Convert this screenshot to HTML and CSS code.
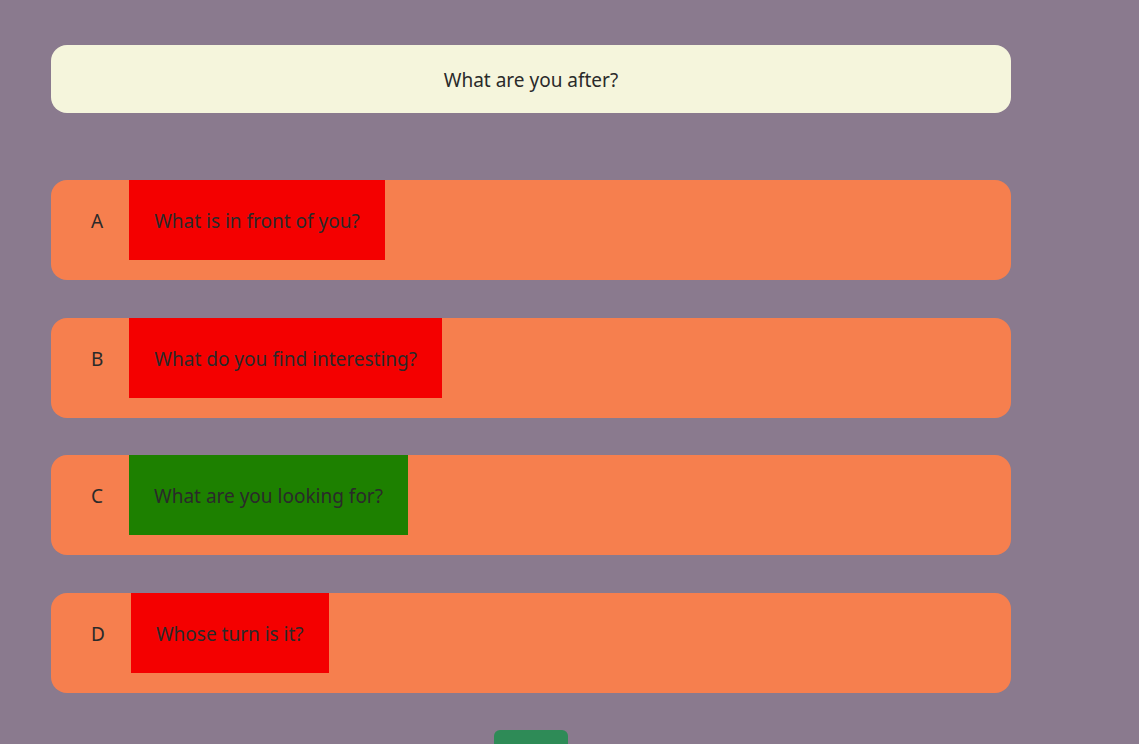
FILE: index.html
```html
<!DOCTYPE html>
<html>
<head>
<meta charset="utf-8">
<link rel="stylesheet" href="styles.css">
</head>
<body>
<main class="quiz">
  <div class="question">What are you after?</div>
  <div class="options">
    <div class="option">
      <span class="letter">A</span>
      <span class="answer wrong">What is in front of you?</span>
    </div>
    <div class="option">
      <span class="letter">B</span>
      <span class="answer wrong">What do you find interesting?</span>
    </div>
    <div class="option">
      <span class="letter">C</span>
      <span class="answer right">What are you looking for?</span>
    </div>
    <div class="option">
      <span class="letter">D</span>
      <span class="answer wrong">Whose turn is it?</span>
    </div>
  </div>
  <div class="actions">
    <button class="next" aria-label="Next"></button>
  </div>
</main>
</body>
</html>
```
FILE: styles.css
```css
html, body {
  margin: 0;
  padding: 0;
  background: #8a7a8e;
  height: 100%;
  overflow: hidden;
}
body {
  font-family: "Noto Sans", "Open Sans", sans-serif;
  color: #2a2a2a;
}
.quiz {
  width: 960px;
  padding: 45px 0 0 51px;
  display: flex;
  flex-direction: column;
}
.question {
  background: #f5f5dc;
  border-radius: 16px;
  height: 68px;
  display: flex;
  align-items: center;
  justify-content: center;
  font-size: 19px;
  padding-top: 1px;
  box-sizing: border-box;
}
.options {
  margin-top: 67px;
  display: flex;
  flex-direction: column;
  gap: 37.67px;
}
.option {
  background: #f67f4e;
  border-radius: 16px;
  height: 100px;
  display: flex;
  align-items: flex-start;
  font-size: 19px;
}
.letter {
  margin-left: 40px;
  margin-right: 26px;
  height: 80px;
  display: flex;
  align-items: center;
  padding-top: 2px;
  box-sizing: border-box;
}
.answer {
  height: 80px;
  display: flex;
  align-items: center;
  padding: 2px 25px 0;
  box-sizing: border-box;
}
.wrong { background: #f40000; }
.right { background: #1d8000; }
.actions {
  margin-top: 37px;
  display: flex;
  justify-content: center;
}
.next {
  width: 74px;
  height: 14px;
  padding: 0;
  border: none;
  border-radius: 6px 6px 0 0;
  background: #2e8b57;
}
```
